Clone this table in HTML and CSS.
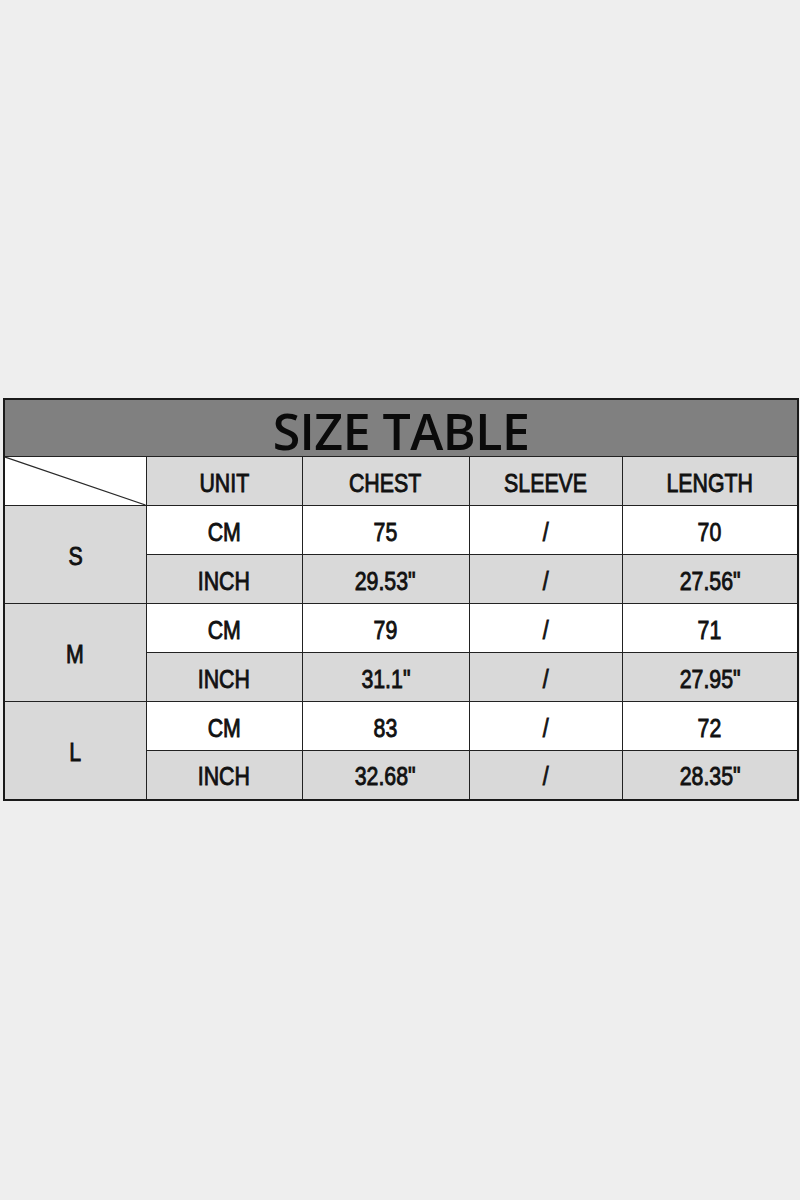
FILE: index.html
```html
<!DOCTYPE html>
<html lang="en">
<head>
<meta charset="utf-8">
<title>Size Table</title>
<link rel="stylesheet" href="styles.css">
</head>
<body>
<main class="page">
  <table class="size-table">
    <colgroup>
      <col class="c-size">
      <col class="c-unit">
      <col class="c-chest">
      <col class="c-sleeve">
      <col class="c-length">
    </colgroup>
    <thead>
      <tr class="title-row">
        <th colspan="5" class="title">SIZE TABLE</th>
      </tr>
      <tr class="head-row">
        <th class="corner">
          <svg class="diag" viewBox="0 0 100 100" preserveAspectRatio="none" aria-hidden="true">
            <line x1="0" y1="0" x2="100" y2="100" stroke="#2a2a2a" stroke-width="1.2" vector-effect="non-scaling-stroke"/>
          </svg>
        </th>
        <th class="grey"><span class="t">UNIT</span></th>
        <th class="grey"><span class="t">CHEST</span></th>
        <th class="grey"><span class="t">SLEEVE</span></th>
        <th class="grey"><span class="t">LENGTH</span></th>
      </tr>
    </thead>
    <tbody>
      <tr class="cm">
        <th rowspan="2" class="size grey"><span class="t">S</span></th>
        <td><span class="t">CM</span></td><td><span class="t">75</span></td><td><span class="t">/</span></td><td><span class="t">70</span></td>
      </tr>
      <tr class="inch">
        <td><span class="t">INCH</span></td><td><span class="t">29.53"</span></td><td><span class="t">/</span></td><td><span class="t">27.56"</span></td>
      </tr>
      <tr class="cm">
        <th rowspan="2" class="size grey"><span class="t">M</span></th>
        <td><span class="t">CM</span></td><td><span class="t">79</span></td><td><span class="t">/</span></td><td><span class="t">71</span></td>
      </tr>
      <tr class="inch">
        <td><span class="t">INCH</span></td><td><span class="t">31.1"</span></td><td><span class="t">/</span></td><td><span class="t">27.95"</span></td>
      </tr>
      <tr class="cm">
        <th rowspan="2" class="size grey"><span class="t">L</span></th>
        <td><span class="t">CM</span></td><td><span class="t">83</span></td><td><span class="t">/</span></td><td><span class="t">72</span></td>
      </tr>
      <tr class="inch">
        <td><span class="t">INCH</span></td><td><span class="t">32.68"</span></td><td><span class="t">/</span></td><td><span class="t">28.35"</span></td>
      </tr>
    </tbody>
  </table>
</main>
</body>
</html>
```

FILE: styles.css
```css
html, body {
  margin: 0;
  padding: 0;
  background: #eeeeee;
}

.page {
  width: 800px;
  height: 1200px;
  padding: 398px 3px 0 3px;
  box-sizing: border-box;
}

.size-table {
  width: 794px;
  border-collapse: collapse;
  table-layout: fixed;
  border: 2px solid #1a1a1a;
  font-family: "Liberation Sans", Arial, sans-serif;
  font-size: 26px;
  font-weight: normal;
  color: #111111;
}

.c-size { width: 142px; }
.c-unit { width: 156px; }
.c-chest { width: 167px; }
.c-sleeve { width: 153px; }
.c-length { width: 176px; }

.size-table th,
.size-table td {
  border: 1px solid #222222;
  text-align: center;
  vertical-align: middle;
  padding: 3px 0 0 0;
  font-weight: normal;
  line-height: 1;
}

.t {
  display: inline-block;
  transform: scaleX(0.82);
  -webkit-text-stroke: 0.9px #111111;
}

.title-row { height: 57px; }

.size-table .title {
  background: #808080;
  font-family: "Open Sans", "Noto Sans", sans-serif;
  font-weight: 600;
  font-size: 50px;
  letter-spacing: -0.5px;
  color: #0a0a0a;
  padding-top: 6px;
}

.head-row,
.cm,
.inch { height: 49px; }

.corner {
  background: #ffffff;
  position: relative;
}

.diag {
  position: absolute;
  inset: 0;
  width: 100%;
  height: 100%;
  display: block;
}

.grey { background: #d9d9d9; }

.cm td { background: #ffffff; }
.inch td { background: #d9d9d9; }
```
